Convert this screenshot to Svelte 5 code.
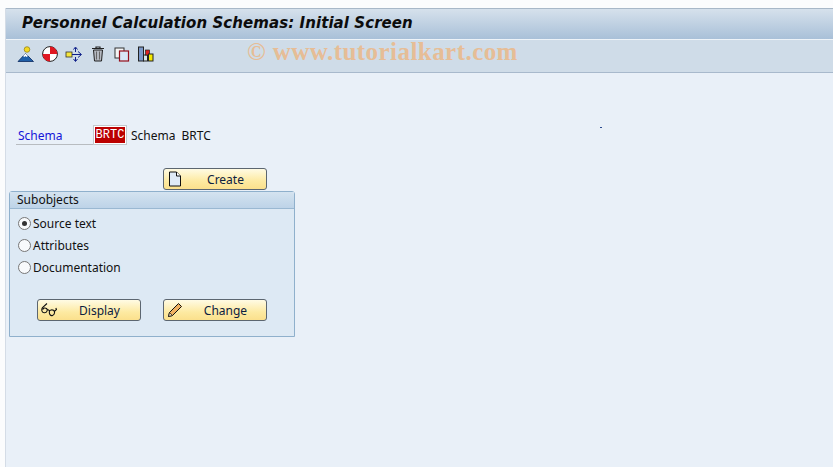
<script>
	const options = [
		{ label: "Source text", checked: true },
		{ label: "Attributes", checked: false },
		{ label: "Documentation", checked: false },
	];
</script>

<div class="screen">
	<div class="window">
		<div class="title">Personnel Calculation Schemas: Initial Screen</div>
		<div class="toolbar">
			<svg class="tool" viewBox="0 0 18 18" width="18" height="18">
				<circle cx="10" cy="4.5" r="2.8" fill="#f5d820" stroke="#8a7a10" stroke-width="0.7" />
				<path d="M1 16.5 L8.5 8.5 L16.5 16.5 Z" fill="#1f5fa8" stroke="#0a2a60" stroke-width="0.8" />
				<path d="M6 11 L8.5 8.6 L11 11 L9.4 12 L8.5 11 L7.5 12 Z" fill="#fff" />
			</svg>
			<svg class="tool" viewBox="0 0 18 18" width="18" height="18">
				<circle cx="9" cy="9" r="7.4" fill="#fff" stroke="#222" stroke-width="1" />
				<path d="M9 1.6 A7.4 7.4 0 0 1 16.4 9 L9 9 Z" fill="#e01822" />
				<path d="M9 9 L9 16.4 A7.4 7.4 0 0 1 1.6 9 Z" fill="#e01822" />
			</svg>
			<svg class="tool" viewBox="0 0 18 18" width="18" height="18">
				<rect x="1" y="7" width="6" height="5" fill="#f5e63c" stroke="#333" stroke-width="0.8" />
				<path d="M7 9.5 H16 M13 6.5 L16.5 9.5 L13 12.5 M10.5 7 V3 M8.5 4.5 L10.5 2 L12.5 4.5 M10.5 12 V16 M8.5 14 L10.5 16.5 L12.5 14" fill="none" stroke="#10208a" stroke-width="1" />
			</svg>
			<svg class="tool" viewBox="0 0 18 18" width="18" height="18">
				<path d="M3 3.5 H15 M7 3 V2 H11 V3" fill="none" stroke="#222" stroke-width="1.2" />
				<path d="M4.5 5 H13.5 L12.5 16 H5.5 Z" fill="#b4b8c0" stroke="#222" stroke-width="1" />
				<path d="M7.5 6.5 V14.5 M10.5 6.5 V14.5" stroke="#666" stroke-width="1" />
			</svg>
			<svg class="tool" viewBox="0 0 18 18" width="18" height="18">
				<rect x="2" y="3" width="9" height="10" fill="#f4f4f4" stroke="#333" stroke-width="1" />
				<rect x="6.5" y="6" width="9" height="10" fill="#d8e6f6" stroke="#96101c" stroke-width="1.2" />
			</svg>
			<svg class="tool" viewBox="0 0 18 18" width="18" height="18">
				<rect x="1.5" y="2" width="5" height="14" fill="#7c98c8" stroke="#222" stroke-width="1" />
				<rect x="6.5" y="10" width="4" height="6" fill="#d8e4e8" stroke="#222" stroke-width="1" />
				<rect x="8.5" y="5" width="4" height="5" fill="#e02020" stroke="#222" stroke-width="0.7" />
				<rect x="11.5" y="9" width="4.5" height="7" fill="#f5e800" stroke="#222" stroke-width="1" />
			</svg>
		</div>
		<div class="content">
			<div class="field">
				<span class="label">Schema</span>
				<span class="input">BRTC</span>
				<span class="value">Schema</span>
				<span class="value">BRTC</span>
			</div>
			<div class="create-row">
				<button class="create">
					<svg viewBox="0 0 16 16" width="16" height="16">
						<path d="M2.5 1 H9.5 L13.5 5 V15 H2.5 Z" fill="#dfeaf6" stroke="#111" stroke-width="1" />
						<path d="M9.5 1 V5 H13.5" fill="#fff" stroke="#111" stroke-width="1" />
					</svg>
					<span>Create</span>
				</button>
			</div>
			<section class="group">
				<header>Subobjects</header>
				<div class="body">
					{#each options as opt}
						<label class="radio">
							<span class="dot" class:checked={opt.checked}></span>
							{opt.label}
						</label>
					{/each}
					<div class="actions">
						<button>
							<svg viewBox="0 0 16 16" width="16" height="16">
								<path d="M6 1.5 L1.5 5.5 C0 8 1 11 3.5 10.8 C6 10.5 7 8 5.5 6.5 C4 5.5 2.5 6 1.8 7.5 M6.3 8 C7.2 7.5 8 8 8.5 9 C7.8 12 9.5 14.2 11.5 13.5 C14 12.5 14 9.5 12.5 8.3 C11 7.5 9 8 8.5 9 M13.3 9.5 L15.5 7.5 L14.8 6" fill="none" stroke="#111" stroke-width="1.1" />
							</svg>
							<span>Display</span>
						</button>
						<button>
							<svg viewBox="0 0 16 16" width="16" height="16">
								<path d="M11.5 1.5 L14.5 4.5 L5.5 13.5 L1.5 14.5 L2.5 10.5 Z" fill="#f0b060" stroke="#111" stroke-width="1" />
								<path d="M2.5 10.5 L5.5 13.5 L1.5 14.5 Z" fill="#f6dcb0" stroke="#111" stroke-width="0.7" />
							</svg>
							<span>Change</span>
						</button>
					</div>
				</div>
			</section>
		</div>
		<div class="watermark">© www.tutorialkart.com</div>
		<div class="speck"></div>
	</div>
</div>

<style>
	:global(body) {
		margin: 0;
		background: #fbfcfd;
	}

	.screen {
		width: 833px;
		height: 467px;
		box-sizing: border-box;
		padding: 8px 0 0 5px;
		overflow: hidden;
		font-family: "Noto Sans", "Liberation Sans", Arial, sans-serif;
		font-size: 12px;
		color: #111;
	}

	.window {
		position: relative;
		height: 459px;
		display: flex;
		flex-direction: column;
		background: #e9f0f8;
		border-left: 1px solid #d4dce6;
	}

	.title {
		height: 32px;
		box-sizing: border-box;
		padding: 2px 0 0 16px;
		background: linear-gradient(#d6e1ec, #a9c0d8);
		border-top: 1px solid #a8b8c8;
		border-bottom: 1px solid #eef3f8;
		font-family: "DejaVu Sans", Verdana, sans-serif;
		font-size: 15px;
		letter-spacing: 0.07px;
		line-height: 24px;
		font-weight: 700;
		font-style: italic;
		color: #0c0c0c;
		white-space: nowrap;
	}

	.toolbar {
		height: 33px;
		box-sizing: border-box;
		display: flex;
		align-items: center;
		gap: 6px;
		padding: 0 0 4px 11px;
		background: #cfdce8;
		border-bottom: 1px solid #a8b9cc;
	}

	.tool {
		display: block;
	}

	.content {
		padding: 52px 0 0 3px;
	}

	.field {
		display: flex;
		align-items: center;
		height: 20px;
		margin-left: 7px;
	}

	.label {
		width: 78px;
		height: 20px;
		line-height: 21px;
		padding-left: 2px;
		color: #1414d8;
		border-bottom: 1px solid #b8bcc0;
		box-sizing: border-box;
	}

	.input {
		width: 30px;
		height: 16px;
		line-height: 17px;
		text-align: center;
		background: #bb0000;
		color: #fff;
		border: 1px solid #fff;
		outline: 1px solid #c4c8cc;
		font-family: "Liberation Mono", monospace;
		font-size: 12px;
		margin: 0 5px 0 0;
	}

	.value {
		margin-right: 6px;
	}

	.create-row {
		display: flex;
		padding: 23px 0 1px 154px;
	}

	button {
		width: 104px;
		height: 22px;
		padding: 0 0 0 3px;
		display: flex;
		align-items: center;
		background: linear-gradient(#fffbe4, #fdeaa2 60%, #fbe08c);
		border: 1px solid #5c6670;
		border-radius: 3px;
		font: inherit;
		color: #0c2040;
	}

	button span {
		flex: 1;
		text-align: center;
		padding-left: 2px;
	}

	.group {
		width: 286px;
		height: 146px;
		box-sizing: border-box;
		background: #dde9f4;
		border: 1px solid #8fb0cc;
		border-radius: 3px 3px 0 0;
	}

	header {
		height: 16px;
		line-height: 15px;
		padding-left: 7px;
		background: linear-gradient(#d4e3f0, #bdd3e8);
		border-bottom: 1px solid #9ab8d2;
	}

	.body {
		padding: 3px 0 0 8px;
	}

	.radio {
		display: flex;
		align-items: center;
		gap: 2px;
		height: 22px;
	}

	.dot {
		width: 11px;
		height: 11px;
		border-radius: 50%;
		border: 1px solid #777;
		background: #f8fafc;
		display: flex;
		align-items: center;
		justify-content: center;
	}

	.dot.checked::after {
		content: "";
		width: 5px;
		height: 5px;
		border-radius: 50%;
		background: #333;
	}

	.actions {
		display: flex;
		gap: 22px;
		margin: 21px 0 0 19px;
	}

	.watermark {
		position: absolute;
		left: 241px;
		top: 30px;
		font-family: "Liberation Serif", serif;
		font-size: 25px;
		font-weight: 700;
		letter-spacing: 0.45px;
		color: #e6bd96;
		white-space: nowrap;
	}

	.speck {
		position: absolute;
		left: 594px;
		top: 119px;
		width: 2px;
		height: 1px;
		background: #2a4a90;
	}
</style>
